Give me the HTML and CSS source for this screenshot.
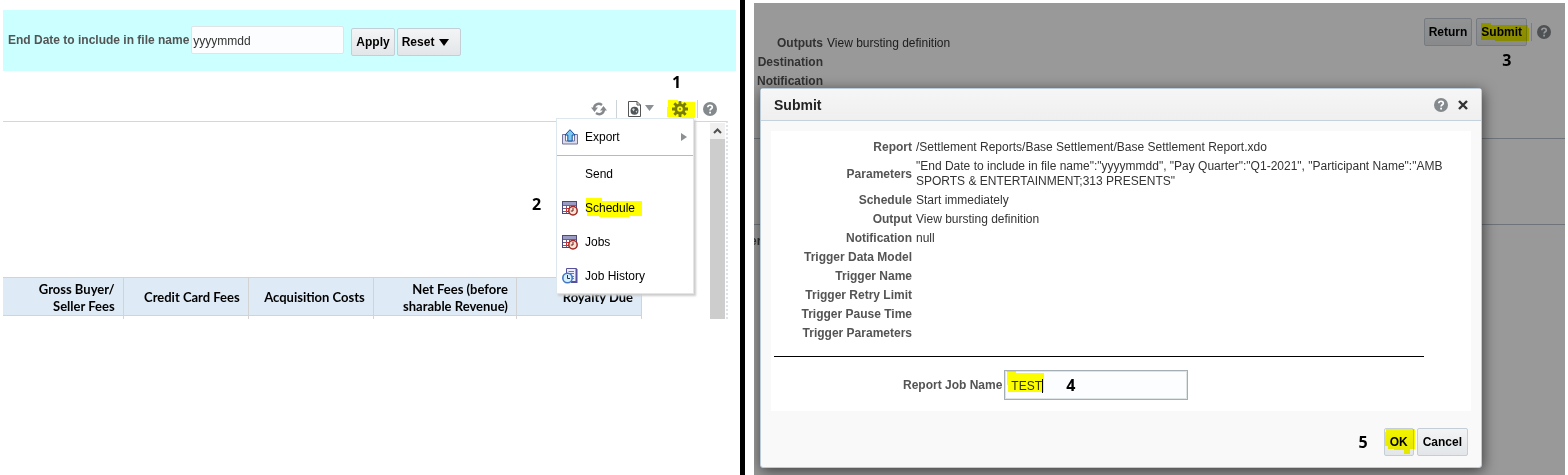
FILE: index.html
```html
<!DOCTYPE html>
<html lang="en">
<head>
    <meta charset="utf-8">
    <title>Schedule a Report</title>
    <link rel="stylesheet" href="styles.css">
</head>
<body>
    <!-- shared icons -->
    <svg class="defs" width="0" height="0">
        <symbol id="help" viewBox="0 0 14 14">
            <circle cx="7" cy="7" r="7" fill="#84898d"/>
            <path d="M4.8 5.3C4.8 2.6 9.3 2.6 9.3 5.2C9.3 6.8 7.1 6.8 7.1 8.5" fill="none" stroke="#fff" stroke-width="1.7"/>
            <rect x="6.2" y="9.7" width="1.8" height="1.8" fill="#fff"/>
        </symbol>
        <symbol id="calendar" viewBox="0 0 16 16">
            <rect x="0.5" y="1.5" width="14" height="12" fill="#fff" stroke="#4b4a78"/>
            <rect x="1" y="2" width="13" height="3" fill="#9a9cc4"/>
            <path d="M1 5.5H14M1 8.5H14M1 11.5H14M4.5 5V13M7.5 5V13M11.5 5V13" stroke="#62648f" fill="none"/>
            <path d="M4.5 8.5H7.5V11.5H4.5Z" fill="#fff" stroke="#e02020"/>
            <circle cx="11" cy="10.8" r="4.2" fill="#f8e3d4" stroke="#a02a26" stroke-width="1.5"/>
            <path d="M11 8V11H8.8" fill="none" stroke="#6d1a18"/>
        </symbol>
    </svg>

    <div class="page">
        <section class="pane report-pane">
            <form class="params">
                <label for="endDate">End Date to include in file name</label>
                <input type="text" id="endDate" value="yyyymmdd">
                <div class="param-buttons">
                    <button type="button" class="btn">Apply</button>
                    <button type="button" class="btn reset">Reset
                        <svg width="10" height="7" viewBox="0 0 10 7"><path d="M0 0H10L5 7Z"/></svg>
                    </button>
                </div>
            </form>

            <div class="toolbar">
                <button type="button" class="tool" aria-label="Refresh">
                    <svg width="16" height="16" viewBox="0 0 16 16">
                        <path d="M3.2 8C2.6 3.4 7.5 1.4 11 4M12.8 8C13.4 12.6 8.5 14.6 5 12" fill="none" stroke="#85898d" stroke-width="2.4"/>
                        <path d="M0 6.5H7L3.5 11ZM9 9.5H16L12.5 5Z" fill="#85898d"/>
                    </svg>
                </button>
                <span class="divider"></span>
                <button type="button" class="tool view" aria-label="View report">
                    <svg width="28" height="16" viewBox="0 0 28 16">
                        <path d="M1.5 0.5H10L13.5 4V15.5H1.5Z" fill="#fff" stroke="#555"/>
                        <path d="M10 0.5V4H13.5" fill="none" stroke="#555"/>
                        <circle cx="7.5" cy="9.8" r="4" fill="#505558"/>
                        <path d="M5 8L7 7.2L7.8 8.6L6.4 10.4ZM8.6 10.2L10.4 9.4L9.4 12Z" fill="#d5d8da"/>
                        <path d="M18 4H27L22.5 10Z" fill="#8b9094"/>
                    </svg>
                </button>
                <div class="actions">
                    <button type="button" class="tool" aria-label="Actions">
                        <svg width="16" height="16" viewBox="0 0 16 16">
                            <circle cx="8" cy="8" r="4.2" fill="none" stroke="#787c7f" stroke-width="2.8"/>
                            <path d="M8 0V3M8 13V16M0 8H3M13 8H16M2.3 2.3L4.5 4.5M11.5 11.5L13.7 13.7M13.7 2.3L11.5 4.5M4.5 11.5L2.3 13.7" stroke="#787c7f" stroke-width="2.8"/>
                            <circle cx="8" cy="8" r="1" fill="#787c7f"/>
                        </svg>
                    </button>
                    <svg class="mark mark-gear" width="28" height="18" viewBox="0 0 28 18"><path d="M1 0H11V2H28V18H13V17H0V7H1Z"/></svg>
                    <span class="step step-1">1</span>

                    <ul class="menu">
                        <li>
                            <button type="button">
                                <svg width="16" height="16" viewBox="0 0 16 16">
                                    <path d="M0.5 5.5H3.5V12H12.5V5.5H15.5V15H0.5Z" fill="#dcdcee" stroke="#73739c"/>
                                    <path d="M8 0.7L13 6H10.2V12H5.8V6H3Z" fill="#7cc8f4" stroke="#174e9b"/>
                                </svg>
                                Export
                                <svg class="more" width="6" height="8" viewBox="0 0 6 8"><path d="M0 0L6 4L0 8Z" fill="#8b9094"/></svg>
                            </button>
                        </li>
                        <li class="after-line"><button type="button" class="no-icon">Send</button></li>
                        <li>
                            <button type="button"><svg width="16" height="16"><use href="#calendar"/></svg>Schedule</button>
                            <svg class="mark mark-schedule" width="56" height="20" viewBox="0 0 56 20"><path d="M0 0H16V3H56V18H43V19H13V18H1V12H0Z"/></svg>
                            <span class="step step-2">2</span>
                        </li>
                        <li><button type="button"><svg width="16" height="16"><use href="#calendar"/></svg>Jobs</button></li>
                        <li>
                            <button type="button">
                                <svg width="16" height="16" viewBox="0 0 16 16">
                                    <path d="M4.5 0.5H14.5V13.5H4.5Z" fill="#eef" stroke="#56519c"/>
                                    <path d="M14.5 1V14H9" fill="none" stroke="#56519c" stroke-width="2"/>
                                    <path d="M6.5 3.5H12M6.5 5.5H12M8 8.5H12M10 10.5H12" stroke="#7773ad"/>
                                    <circle cx="5.5" cy="10" r="4.7" fill="#d8f1ff" stroke="#4278c4" stroke-width="1.6"/>
                                    <path d="M5.5 7V10.5H8" fill="none" stroke="#234"/>
                                </svg>
                                Job History
                            </button>
                        </li>
                    </ul>
                </div>
                <span class="divider"></span>
                <button type="button" class="tool" aria-label="Help"><svg width="14" height="14"><use href="#help"/></svg></button>
            </div>

            <div class="report">
                <table class="fees">
                    <colgroup><col class="w-a"><col class="w-b"><col class="w-b"><col class="w-c"><col class="w-b"></colgroup>
                    <thead>
                        <tr>
                            <th>Gross Buyer/<br>Seller Fees</th>
                            <th>Credit Card Fees</th>
                            <th>Acquisition Costs</th>
                            <th>Net Fees (before<br>sharable Revenue)</th>
                            <th>Royalty Due</th>
                        </tr>
                    </thead>
                    <tbody>
                        <tr><td></td><td></td><td></td><td></td><td></td></tr>
                    </tbody>
                </table>
                <div class="scrollbar">
                    <svg width="15" height="16" viewBox="0 0 15 16"><path d="M4 10L7.5 6.5L11 10" fill="none" stroke="#505050" stroke-width="2"/></svg>
                </div>
            </div>
        </section>

        <section class="pane job-pane">
            <div class="job">
                <div class="job-head">
                    <table class="details job-details">
                        <tr><th scope="row">Outputs</th><td>View bursting definition</td></tr>
                        <tr><th scope="row">Destination</th><td></td></tr>
                        <tr><th scope="row">Notification</th><td></td></tr>
                    </table>
                    <div class="job-buttons">
                        <button type="button" class="btn">Return</button>
                        <div class="marked">
                            <button type="button" class="btn">Submit</button>
                            <svg class="mark mark-submit" width="48" height="19" viewBox="0 0 48 19"><path d="M0 0H10V2H47V5H48V18H14V17H0Z"/></svg>
                            <span class="step step-3">3</span>
                        </div>
                        <span class="divider"></span>
                        <svg width="14" height="14"><use href="#help"/></svg>
                    </div>
                </div>
                <div class="job-tabs"></div>
                <div class="job-general">er</div>
                <div class="scrim"></div>

                <div class="dialog" role="dialog" aria-labelledby="dialogTitle">
                    <div class="dialog-head">
                        <h2 id="dialogTitle">Submit</h2>
                        <button type="button" class="tool" aria-label="Help"><svg width="14" height="14"><use href="#help"/></svg></button>
                        <button type="button" class="tool" aria-label="Close">
                            <svg width="10" height="10" viewBox="0 0 10 10"><path d="M1 1L9 9M9 1L1 9" stroke="#333" stroke-width="2.4"/></svg>
                        </button>
                    </div>
                    <div class="dialog-body">
                        <table class="details">
                            <tr><th scope="row">Report</th><td>/Settlement Reports/Base Settlement/Base Settlement Report.xdo</td></tr>
                            <tr><th scope="row">Parameters</th><td>"End Date to include in file name":"yyyymmdd", "Pay Quarter":"Q1-2021", "Participant Name":"AMB SPORTS &amp; ENTERTAINMENT;313 PRESENTS"</td></tr>
                            <tr><th scope="row">Schedule</th><td>Start immediately</td></tr>
                            <tr><th scope="row">Output</th><td>View bursting definition</td></tr>
                            <tr><th scope="row">Notification</th><td>null</td></tr>
                            <tr><th scope="row">Trigger Data Model</th><td></td></tr>
                            <tr><th scope="row">Trigger Name</th><td></td></tr>
                            <tr><th scope="row">Trigger Retry Limit</th><td></td></tr>
                            <tr><th scope="row">Trigger Pause Time</th><td></td></tr>
                            <tr><th scope="row">Trigger Parameters</th><td></td></tr>
                        </table>
                        <hr>
                        <div class="job-name">
                            <label for="jobName">Report Job Name</label>
                            <div class="marked">
                                <input type="text" id="jobName" value="TEST">
                                <svg class="mark mark-name" width="37" height="22" viewBox="0 0 37 22"><path d="M0 0H9V2H37V21H1V14H0Z"/></svg>
                                <span class="caret"></span>
                                <span class="step step-4">4</span>
                            </div>
                        </div>
                    </div>
                    <div class="dialog-foot">
                        <span class="step">5</span>
                        <div class="marked">
                            <button type="button" class="btn">OK</button>
                            <svg class="mark mark-ok" width="30" height="25" viewBox="0 0 30 25"><path d="M1 0H30V20H25V25H19V21H9V20H3V17H0V3H1Z"/></svg>
                        </div>
                        <button type="button" class="btn">Cancel</button>
                    </div>
                </div>
            </div>
        </section>
    </div>
</body>
</html>
```

FILE: styles.css
```css
* {
    box-sizing: border-box;
}
body {
    margin: 0;
    background: #fff;
    color: #333;
    font-family: "Liberation Sans", Arial, sans-serif;
    font-size: 12px;
    line-height: 15px;
}
button, input {
    font: inherit;
}
svg {
    display: block;
    flex: none;
}
.defs {
    position: absolute;
}
.page {
    display: grid;
    grid-template-columns: 740fr 828fr;
    min-height: 100vh;
}

/* buttons */
.btn {
    height: 28px;
    padding: 0 4px;
    border: 1px solid #c4ced7;
    border-radius: 2px;
    background: linear-gradient(#f3f4f5, #e3e6e9);
    color: #000;
    font-weight: bold;
}
.tool {
    display: flex;
    padding: 0;
    border: 0;
    background: none;
}
.divider {
    width: 1px;
    height: 18px;
    background: #ccd3d9;
}

/* callouts */
.marked {
    position: relative;
}
.mark {
    position: absolute;
    fill: #ff0;
    mix-blend-mode: multiply;
    pointer-events: none;
}
.step {
    color: #000;
    font: bold 16px/20px "Open Sans", sans-serif;
}
.step-1, .step-2, .step-3, .step-4 {
    position: absolute;
}
.mark-gear {
    left: -5px;
    top: 0;
}
.step-1 {
    left: 0;
    top: -28px;
}
.mark-schedule {
    left: 29px;
    top: 7px;
}
.step-2 {
    left: -25px;
    top: 3px;
}
.mark-submit {
    left: 5px;
    top: 5px;
}
.step-3 {
    left: 26px;
    top: 32px;
}
.mark-name {
    left: 3px;
    top: 1px;
}
.step-4 {
    left: 62px;
    top: 5px;
}
.mark-ok {
    left: 1px;
    top: 1px;
}

/* report viewer */
.report-pane {
    padding: 10px 4px 0 3px;
}
.params {
    display: flex;
    height: 61px;
    padding: 16px 5px;
    background: #cff;
}
.params label {
    margin-right: 2px;
    color: #545454;
    font-weight: bold;
    line-height: 28px;
}
.params input {
    width: 153px;
    height: 28px;
    padding: 2px 1px 0;
    border: 1px solid #dfe4e7;
    border-radius: 2px;
    background: #fcfdfe;
    color: #333;
}
.param-buttons {
    display: flex;
    gap: 2px;
    margin: 2px 0 0 7px;
}
.reset {
    display: flex;
    align-items: center;
    gap: 5px;
    padding-right: 11px;
}
.toolbar {
    display: flex;
    justify-content: flex-end;
    align-items: center;
    height: 50px;
    padding: 26px 19px 0 0;
}
.toolbar .divider {
    margin: 0 5px 0 9px;
}
.toolbar .view {
    margin: 0 17px 0 5px;
}
.actions {
    position: relative;
    display: flex;
    align-items: center;
    height: 18px;
}
.menu {
    position: absolute;
    top: 18px;
    right: -6px;
    z-index: 2;
    width: 138px;
    margin: 0;
    padding: 1px 0 0;
    border: 1px solid #dde7ee;
    background: #fff;
    box-shadow: 2px 2px 2px #ccc;
    list-style: none;
}
.menu li {
    position: relative;
}
.menu button {
    display: flex;
    align-items: center;
    gap: 7px;
    width: 100%;
    height: 34px;
    padding: 0 6px 0 5px;
    border: 0;
    background: none;
    color: #000;
}
.menu .no-icon {
    padding-left: 28px;
}
.menu .after-line {
    margin-top: 1px;
    padding-top: 1px;
    border-top: 1px solid #a3bfd8;
}
.menu .more {
    margin-left: auto;
}
.report {
    display: flex;
    justify-content: space-between;
    align-items: flex-end;
    height: 198px;
    margin-right: 8px;
    border-top: 1px solid #d0d7de;
    border-right: 2px dotted #dde3e8;
}
.fees {
    width: 639px;
    border-collapse: collapse;
    table-layout: fixed;
    color: #000;
    font: bold 13px/17px Lato, sans-serif;
}
.w-a {
    width: 120px;
}
.w-b {
    width: 125px;
}
.w-c {
    width: 143px;
}
.fees th {
    height: 38px;
    padding: 3px 8px 0;
    border: 1px solid #d3d3d3;
    border-left: 0;
    background: #deeaf6;
    text-align: right;
    white-space: nowrap;
}
.fees td {
    height: 4px;
    padding: 0;
    border-right: 1px solid #d3d3d3;
}
.scrollbar {
    align-self: stretch;
    width: 15px;
    margin: 1px 1px 0 0;
    background: #cdcdcd;
}
.scrollbar svg {
    background: #f0f0f0;
}

/* job page behind the dialog */
.job-pane {
    padding: 3px 3px 0 9px;
    border-left: 5px solid #000;
}
.job {
    position: relative;
    height: 100%;
    overflow: hidden;
}
.job-head {
    display: flex;
    justify-content: space-between;
    height: 136px;
    border-bottom: 1px solid #b8c2cc;
}
.details {
    border-collapse: collapse;
}
.details th, .details td {
    padding: 2px;
}
.details th {
    width: 143px;
    color: #545454;
    text-align: right;
}
.job-details {
    align-self: flex-start;
    margin-top: 31px;
}
.job-details th {
    width: 71px;
}
.job-buttons {
    display: flex;
    align-items: center;
    align-self: flex-start;
    gap: 4px;
    margin: 15px 14px 0 0;
}
.job-buttons .divider {
    margin-right: 1px;
}
.job-tabs {
    height: 86px;
    border-bottom: 1px solid #b8c2cc;
}
.job-general {
    padding-top: 9px;
    color: #545454;
    font-weight: bold;
    text-indent: -4px;
}
.scrim {
    position: absolute;
    inset: 0;
    background: rgba(0, 0, 0, 0.4);
}

/* submit dialog */
.dialog {
    position: absolute;
    top: 85px;
    left: 6px;
    right: 83px;
    border: 1px solid #bccbd8;
    border-radius: 3px;
    background: #f9f9f9;
    box-shadow: 1px 3px 14px rgba(0, 0, 0, 0.6);
}
.dialog-head {
    display: flex;
    align-items: center;
    gap: 10px;
    height: 32px;
    padding: 0 13px;
    border-bottom: 1px solid #c4d2dd;
    background: linear-gradient(#f6f6f6, #efefef);
}
.dialog-head h2 {
    flex: 1;
    margin: 0;
    color: #222;
    font-size: 14px;
    line-height: 16px;
}
.dialog-body {
    margin: 10px 10px 0;
    padding: 7px 0 11px;
    background: #fff;
}
.dialog-body td {
    padding-right: 24px;
}
.dialog-body hr {
    margin: 13px 47px 13px 3px;
    border: 0;
    border-top: 1px solid #000;
}
.job-name {
    display: flex;
    align-items: center;
    gap: 2px;
    padding-left: 132px;
}
.job-name label {
    color: #545454;
    font-weight: bold;
}
.job-name input {
    display: block;
    width: 184px;
    height: 30px;
    padding: 1px 6px 0;
    border: 1px solid #a5adb5;
    outline: 1px solid #dfe4e7;
    outline-offset: -2px;
    background: #fcfdfe;
    color: #333;
}
.caret {
    position: absolute;
    left: 38px;
    top: 9px;
    width: 1px;
    height: 14px;
    background: #000;
}
.dialog-foot {
    display: flex;
    justify-content: flex-end;
    align-items: center;
    gap: 3px;
    padding: 17px 13px 11px;
}
.dialog-foot .btn {
    padding: 0 5px;
}
.dialog-foot .step {
    margin-right: 13px;
}
```
